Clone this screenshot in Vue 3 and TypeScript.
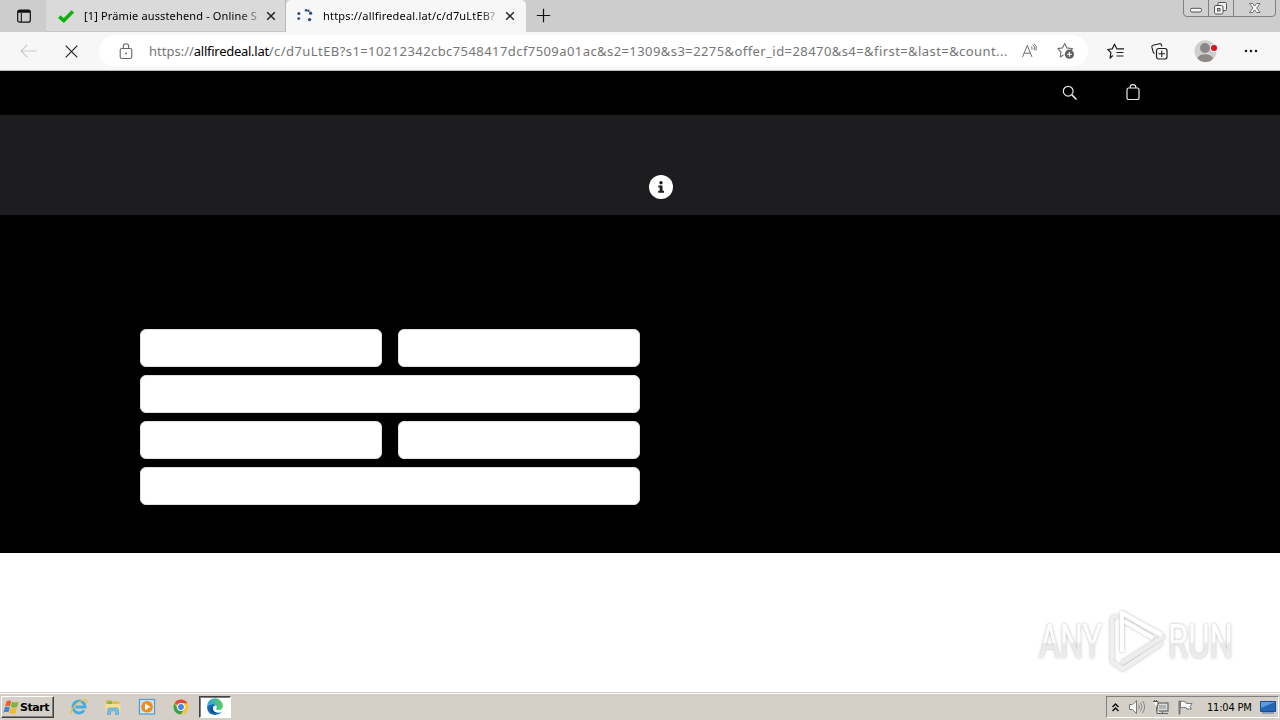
<script setup lang="ts">
const fields: { id: string; wide: boolean }[] = [
  { id: 'first', wide: false },
  { id: 'last', wide: false },
  { id: 'street', wide: true },
  { id: 'zip', wide: false },
  { id: 'city', wide: false },
  { id: 'email', wide: true },
]
const host = 'allfiredeal.lat'
const path = '/c/d7uLtEB?s1=10212342cbc7548417dcf7509a01ac&s2=1309&s3=2275&offer_id=28470&s4=&first=&last=&count...'
</script>

<template>
  <div class="screen">
    <div class="tabs">
      <div class="tab-menu">
        <svg width="16" height="16" viewBox="0 0 16 16"><rect x="1.7" y="2.2" width="12.6" height="12" rx="2" fill="none" stroke="#111" stroke-width="1.2" /><path d="M1.5 4.8V4a2 2 0 0 1 2-2h9a2 2 0 0 1 2 2v.8z" fill="#111" /><path d="M5.3 5v9" stroke="#111" stroke-width="1.1" /></svg>
      </div>
      <div class="tab">
        <svg class="fav" width="16" height="16" viewBox="0 0 16 16"><path d="M1.3 8.6 5.8 12.6 14.8 3.4" fill="none" stroke="#10b010" stroke-width="3.6" /></svg>
        <span class="title t1">[1] Prämie ausstehend - Online S</span>
        <svg class="close" width="10" height="10" viewBox="0 0 10 10"><path d="M1.2 1.2 8.8 8.8M8.8 1.2 1.2 8.8" stroke="#222" stroke-width="1.5" /></svg>
      </div>
      <div class="tab active">
        <svg class="fav" width="18" height="16" viewBox="0 0 18 16"><g fill="#2b4c74"><circle cx="2.8" cy="5.6" r="1.5" /><circle cx="2.7" cy="10.600" r="1.400" /><circle cx="10" cy="2.200" r="1.200" /><circle cx="12.400" cy="2.800" r="1.200" /><circle cx="14.600" cy="5.200" r="1.600" /><circle cx="13.600" cy="11.600" r="1.700" /></g></svg>
        <span class="title t2">https://allfiredeal.lat/c/d7uLtEB?</span>
        <svg class="close" width="10" height="10" viewBox="0 0 10 10"><path d="M1.2 1.2 8.8 8.8M8.8 1.2 1.2 8.8" stroke="#222" stroke-width="1.5" /></svg>
      </div>
      <svg class="plus" width="15" height="15" viewBox="0 0 15 15"><path d="M7.5 .8v13.4M.8 7.5h13.4" stroke="#111" stroke-width="1.2" /></svg>
      <svg class="winbtns" width="94" height="17" viewBox="0 0 94 17">
        <path d="M.5 0v13q0 3.5 3.5 3.5h85q3.500 0 3.500-3.500V0M25.500 0v16M50.500 0v16" fill="#d0d0d0" stroke="#808080" />
        <rect x="7.500" y="8.300" width="11" height="3.700" rx="1.500" fill="#f6f6f6" stroke="#555" />
        <rect x="35" y="2.500" width="8.500" height="8" rx="1" fill="#eee" stroke="#555" />
        <rect x="31.500" y="5.500" width="8.500" height="8.500" rx="1.500" fill="#f6f6f6" stroke="#555" /><rect x="34.500" y="8.500" width="2.500" height="2.500" fill="#ccc" stroke="#555" />
        <path d="M66.500 3.500h3.200l2 2.600 2-2.600H77L73.700 8l3.300 4.500h-3.300l-2-2.600-2 2.600h-3.200L69.800 8z" fill="#f8f8f8" stroke="#666" stroke-width=".9" />
      </svg>
    </div>

    <div class="toolbar">
      <svg class="back" width="17" height="14" viewBox="0 0 17 14"><path d="M7.200 .8 1 7l6.200 6.200M1 7h15.500" fill="none" stroke="#c9c9c9" stroke-width="1.200" /></svg>
      <svg class="stop" width="13" height="13" viewBox="0 0 13 13"><path d="M.7 .7 12.300 12.300M12.300 .7 .7 12.300" stroke="#222" stroke-width="1.200" /></svg>
      <div class="address">
        <svg class="lock" width="14" height="17" viewBox="0 0 14 17"><path d="M3 5.500h8a1.800 1.800 0 0 1 1.800 1.800v6.400a1.800 1.800 0 0 1-1.800 1.800H3a1.800 1.800 0 0 1-1.800-1.800V7.300A1.800 1.800 0 0 1 3 5.500zM4.300 5.500V3.500a2.700 2.700 0 0 1 5.400 0v2" fill="none" stroke="#666" stroke-width="1.100" /><circle cx="7" cy="10.500" r="1" fill="#666" /></svg>
        <div class="url"><span class="scheme">https://</span><span class="host">{{ host }}</span><span class="path">{{ path }}</span></div>
        <svg class="aloud" width="17" height="16" viewBox="0 0 17 16"><path d="M1.500 14 6.300 2.500 11 14M3.200 10.200h6.200M10 3.300q1.500 1.300 1 3.300M11.500 1.600q3 2 1.800 5.600M13 .5q3.500 2.800 2 7" fill="none" stroke="#707070" stroke-width="1" /></svg>
        <svg class="fav-add" width="18" height="18" viewBox="0 0 18 18"><path d="M6.500 13 3.200 15l.8-5L.8 6.600l4.700-.7L7.700 1.500l2.200 4.400 5.800.8-2.100 2.100" fill="none" stroke="#707070" stroke-width="1.100" stroke-linejoin="round" /><circle cx="12.400" cy="12.200" r="4.600" fill="#606060" /><path d="M12.400 9.700v5M9.900 12.200h5" stroke="#fff" stroke-width="1.100" /></svg>
      </div>
      <svg class="favorites" width="18" height="17" viewBox="0 0 18 17"><path d="M5.800 12.500 3.100 15.200l.8-5.500L.8 6.500l4.500-.7L7.500 1.200l2.300 4.600H17M9.500 9.500h7M9.500 13h7" fill="none" stroke="#1c1c1c" stroke-width="1.200" stroke-linejoin="round" /></svg>
      <svg class="collections" width="17" height="17" viewBox="0 0 17 17"><path d="M3.600 10.500Q2.500 10 2.200 9L.9 4.200Q.6 2.600 2 2.200l6.500-1.500Q10 .5 10.500 2l.4 1.400" fill="none" stroke="#1c1c1c" stroke-width="1.100" /><rect x="5.500" y="5.500" width="10.500" height="10.500" rx="2.200" fill="#f7f7f7" stroke="#1c1c1c" stroke-width="1.200" /><path d="M10.750 7.500v6.500M7.500 10.750H14" stroke="#1c1c1c" stroke-width="1.100" /></svg>
      <svg class="avatar" width="24" height="23" viewBox="0 0 24 23"><circle cx="11.500" cy="11.300" r="11" fill="#cfd0ce" /><circle cx="11" cy="8" r="5" fill="#8b8885" /><path d="M3.500 18.500Q5 14.300 11 14.300t8 4.200Q16 22 11.500 22t-8-3.500" fill="#8b8885" /><circle cx="20" cy="8" r="4.200" fill="#e3e8e5" /><circle cx="20" cy="8" r="3" fill="#db1020" /></svg>
      <svg class="more" width="14" height="4" viewBox="0 0 14 4"><g fill="#1a1a1a"><circle cx="2" cy="2" r="1.250" /><circle cx="7" cy="2" r="1.250" /><circle cx="12" cy="2" r="1.250" /></g></svg>
    </div>

    <header class="site-nav">
      <svg class="search" width="16" height="16" viewBox="0 0 16 16"><circle cx="6.200" cy="6.200" r="4.900" fill="none" stroke="#e8e8e8" stroke-width="1.200" /><path d="m9.900 9.900 4.600 4.600" stroke="#e8e8e8" stroke-width="1.600" /></svg>
      <svg class="bag" width="14" height="17" viewBox="0 0 14 17"><rect x="1" y="4" width="12" height="11.500" rx="1.600" fill="none" stroke="#e8e8e8" stroke-width="1.200" /><path d="M4.200 4V3a2.800 2.300 0 0 1 5.600 0v1" fill="none" stroke="#e8e8e8" stroke-width="1.200" /></svg>
    </header>
    <section class="notice">
      <svg width="24" height="24" viewBox="0 0 24 24"><circle cx="12" cy="12" r="12" fill="#fff" /><circle cx="12" cy="7.800" r="1.700" fill="#1d1d1f" /><path d="M9.300 10.500h4.200v5.300h1.500v2H9.200v-2h1.500v-3.300H9.300z" fill="#1d1d1f" /></svg>
    </section>
    <main class="checkout">
      <form class="form"><input v-for="f in fields" :key="f.id" :class="{ wide: f.wide }" type="text" /></form>
    </main>
    <section class="blank">
      <svg class="mark" width="220" height="74" viewBox="0 0 220 74">
        <defs>
          <linearGradient id="fade" x1="0" y1="0" x2="0" y2="1"><stop offset="0" stop-color="#fff" /><stop offset=".5" stop-color="#fdfdfd" /><stop offset=".55" stop-color="#e9e9e9" /><stop offset="1" stop-color="#f1f1f1" /></linearGradient>
          <filter id="glow" x="-10%" y="-20%" width="120%" height="140%"><feDropShadow dx="0" dy="0" stdDeviation="1.700" flood-color="#777" flood-opacity=".55" /></filter>
        </defs>
        <g filter="url(#glow)">
          <g class="letters" fill="none" stroke="none">
            <text x="9" y="54" textLength="63" lengthAdjust="spacingAndGlyphs" fill="url(#fade)">ANY</text>
            <text x="138" y="54" textLength="65" lengthAdjust="spacingAndGlyphs" fill="url(#fade)">RUN</text>
          </g>
          <g fill="none" stroke-width="4" stroke-linejoin="round">
            <path d="M92 48V9l41 24-41 26" stroke="#eee" />
            <path d="M92 48V9l40 22" stroke="#fff" />
            <path d="M82 14v44M82 14l5-2M82 58 93 65 132 39" stroke="#efefef" />
            <path d="M94 17l29 17" stroke="#fff" />
          </g>
        </g>
      </svg>
    </section>

    <footer class="taskbar">
      <div class="start">
        <svg width="17" height="16" viewBox="0 0 17 16"><path d="M3.500 2.500Q6 .8 8.200 2.300L7 7.500Q4.500 6 2 7.500z" fill="#e6622b" /><path d="M9 2.800q3 1.500 6.500 0L14.200 8q-3 1.300-6.300 0z" fill="#7fb43d" /><path d="M1.800 8.300q2.500-1.300 5 0l-1.300 5Q3 12 .4 13.500z" fill="#3d86cf" /><path d="M7.700 9q3 1.200 6.200 0l-1.500 5.200q-3 1.300-6-.3z" fill="#f2b92b" /></svg>
        <span>Start</span>
      </div>
      <div class="launch">
        <svg width="18" height="18" viewBox="0 0 18 18"><path d="M14 12.300A6 6 0 1 1 15 9H5.500" fill="none" stroke="#43aee5" stroke-width="2.800" /><path d="M2.500 15.500Q-.5 17 2 11.500 7 3 15 1.500q3-.2 1.200 4" fill="none" stroke="#e9bd3d" stroke-width="1.200" /></svg>
        <svg width="18" height="18" viewBox="0 0 18 18"><path d="M2 3.500 3 2h4l1 1.500h7.500V14H2z" fill="#e2b84f" /><path d="M3.500 3.500H8V6H3.500z" fill="#77b65a" /><path d="M1.500 6h15v8h-15z" fill="#f6df91" /><path d="M3.500 16.500V12q0-2 2-2h7q2 0 2 2v4.500h-3V13h-5v3.500z" fill="#79bde2" stroke="#4f9bcb" stroke-width=".6" /></svg>
        <svg width="18" height="18" viewBox="0 0 18 18"><rect x="1.500" y="1.500" width="15" height="14.500" fill="#d9edf9" stroke="#539dcc" stroke-width="1.300" /><rect x="3.500" y="3.500" width="11" height="10.500" fill="#b5d9ee" /><circle cx="9" cy="8.800" r="5.800" fill="#f08b1f" /><path d="m7 5.500 5.500 3.300L7 12.200z" fill="#fff" /></svg>
        <svg width="18" height="18" viewBox="0 0 18 18"><circle cx="9" cy="9" r="7.500" fill="#f7c52f" /><path d="M9 9 2.500 5.300A7.500 7.500 0 0 1 15.500 5.300H9z" fill="#df4a3c" /><path d="M9 9 5.700 11 2.500 5.300A7.500 7.500 0 0 0 8.700 16.500L12.300 11z" fill="#35a353" /><circle cx="9" cy="9" r="3.900" fill="#fff" /><circle cx="9" cy="9" r="2.900" fill="#4285e8" /></svg>
      </div>
      <div class="running">
        <svg width="18" height="18" viewBox="0 0 18 18"><defs><linearGradient id="edge"><stop offset="0" stop-color="#23a5dc" /><stop offset="1" stop-color="#5fce60" /></linearGradient></defs><path d="M1 8.500A8 8 0 0 1 17 8q0 4-4.500 4-2.500 0-2.500-1 1-1 .7-2.500Q9.800 6 6.500 6 2.800 6 1 8.500z" fill="url(#edge)" /><path d="M1 8.500Q2.800 6 6.500 6q2 0 3.200 1.200-3 .8-2.800 3.500.6 4 5.600 4 1.800 0 3.200-.8Q13 17 9 17 1 16.500 1 8.500z" fill="#1269b5" /><path d="M7 10.200Q6.500 14 11 14.800 7 16 5 13.500 3.500 11 5.500 8.500" fill="#124f93" /></svg>
      </div>
      <div class="tray">
        <svg width="9" height="11" viewBox="0 0 9 11"><path d="M1.500 5 4.500 2l3 3M1.500 9l3-3 3 3" fill="none" stroke="#111" stroke-width="1.500" /></svg>
        <svg class="sound" width="18" height="16" viewBox="0 0 18 16"><path d="M1.500 5.500h3L8.500 1.500v13l-4-4h-3z" fill="#fafafa" stroke="#777" /><path d="M10.500 5.500q1.500 2.500 0 5M12.500 3.700q3 4.300 0 8.600M14.600 2q4 6 0 12" fill="none" stroke="#888" /></svg>
        <svg class="net" width="18" height="17" viewBox="0 0 18 17"><rect x="5" y="4" width="11" height="8" fill="#ddd" stroke="#666" stroke-width="1.200" /><path d="M7 6h7v4H7z" fill="#b4b4b4" /><path d="M8 14.500h8M10.500 12.500v2" stroke="#666" /><path d="M1 2.500h5v4H5v8h3" fill="#f8f8f8" stroke="#555" /><path d="M2.500 1v2M4.500 1v2" stroke="#555" /></svg>
        <svg class="flag" width="17" height="17" viewBox="0 0 17 17"><path d="M2.500 1.500v14" stroke="#777" stroke-width="2" /><path d="M3.500 2.500q3-1 6 1v1h5.500l-2 3 1.500 2.500H9.500V9q-3-1.500-6 0z" fill="#fafafa" stroke="#777" /></svg>
        <span class="clock">11:04 PM</span>
        <svg class="desk" width="16" height="15" viewBox="0 0 16 15"><path d="M.5 1.500h15v10H.5z" fill="#2565b6" stroke="#1c4b91" /><path d="M1 2h14L1 8z" fill="#5b9be0" /><path d="M2 13h12" stroke="#718fb4" stroke-width="1.500" /></svg>
      </div>
    </footer>
  </div>
</template>

<style>
body { margin: 0; overflow: hidden; }
</style>

<style scoped>
.screen { width: 1280px; height: 720px; display: flex; flex-direction: column; background: #fff; font-family: "Noto Sans", "Open Sans", sans-serif; overflow: hidden; }
svg { display: block; flex: none; }
.screen > * { box-sizing: border-box; flex: none; }
.tabs { height: 32px; background: #cdcdcd; display: flex; align-items: flex-start; }
.tab-menu { width: 46px; height: 32px; padding: 8px 0 0 16px; box-sizing: border-box; }
.tab { width: 240px; height: 32px; box-sizing: border-box; background: #dadada; border-right: 1px solid #b8b8b8; border-bottom: 1px solid #c5c5c5; display: flex; align-items: center; padding-left: 12px; }
.tab.active { background: #f7f7f7; border-bottom: 0; border-right: 0; border-radius: 5px 5px 0 0; padding-left: 10px; }
.title { font-size: 11px; white-space: nowrap; color: #000; line-height: 18px; width: 174px; margin-left: 10px; mask-image: linear-gradient(90deg, #000 155px, transparent 182px); }
.t1 { letter-spacing: .15px; }
.t2 { margin-left: 9px; letter-spacing: .18px; }
.close { margin-left: 8px; }
.active .close { margin-left: 8px; }
.plus { margin: 8px 0 0 10px; }
.winbtns { margin: 0 3px 0 auto; }
.toolbar { height: 39px; background: #f7f7f7; border-bottom: 1px solid #b9bdbd; display: flex; align-items: center; }
.back { margin-left: 20px; }
.stop { margin-left: 28px; }
.address { width: 989px; height: 32px; margin-left: 21px; background: #fff; border-radius: 16px; display: flex; align-items: center; box-sizing: border-box; padding-left: 20px; }
.url { width: 862px; margin-left: 16px; white-space: nowrap; font-size: 13px; color: #767676; line-height: 20px; }
.host { color: #000; letter-spacing: -.27px; }
.path { letter-spacing: .426px; }
.aloud { margin-left: 10px; }
.fav-add { margin-left: 19px; }
.favorites { margin-left: 19px; }
.collections { margin-left: 26px; }
.avatar { margin-left: 26px; }
.more { margin-left: 26px; }
.site-nav { height: 44px; background: #000; display: flex; align-items: center; padding-left: 1062px; }
.bag { margin: -2px 0 0 48px; }
.notice { height: 100px; background: #1d1d1f; padding: 60px 0 0 649px; }
.checkout { height: 338px; background: #000; padding: 114px 0 0 140px; }
.form { width: 500px; display: grid; grid-template-columns: 1fr 1fr; gap: 8px 16px; }
.form input { box-sizing: border-box; min-width: 0; width: 100%; height: 38px; border: 1px solid #dee2e6; border-radius: 6px; background: #fff; padding: 6px 12px; }
.form .wide { grid-column: span 2; }
.blank { height: 139px; background: #fff; display: flex; justify-content: flex-end; padding: 51px 30px 0 0; }
.letters { font-family: Roboto, "Liberation Sans", sans-serif; font-size: 49px; }
.taskbar { height: 28px; background: #d4d0c8; border-top: 1px solid #d4d0c8; box-shadow: inset 0 1px #fff; display: flex; align-items: center; padding-top: 1px; }
.start { width: 53px; height: 22px; margin-left: 1px; box-sizing: border-box; border: 1px solid; border-color: #fff #404040 #404040 #fff; box-shadow: inset -1px -1px #808080; display: flex; align-items: center; font: bold 11px "DejaVu Sans", sans-serif; letter-spacing: -.45px; padding-left: 1px; }
.launch { display: flex; gap: 16px; margin-left: 16px; }
.running { width: 32px; height: 22px; margin-left: 9px; box-sizing: border-box; border: 1px solid; border-color: #404040 #fff #fff #404040; box-shadow: inset 1px 1px #808080; background: #fff; display: flex; align-items: center; justify-content: center; }
.tray { width: 173px; height: 22px; margin: 0 1px 0 auto; box-sizing: border-box; border: 1px solid; border-color: #808080 #fff #fff #808080; display: flex; align-items: center; padding-left: 4px; }
.sound { margin-left: 8px; }
.net { margin-left: 6px; }
.flag { margin-left: 7px; }
.clock { font: 11px "DejaVu Sans Condensed", "DejaVu Sans", sans-serif; margin-left: 13px; width: 46px; white-space: nowrap; letter-spacing: -.2px; }
.desk { margin-left: 7px; }
</style>
